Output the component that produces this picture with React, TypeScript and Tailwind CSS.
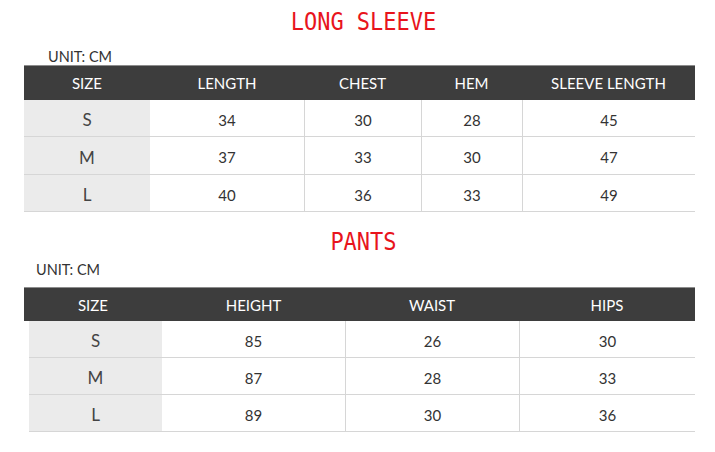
import React from 'react';

const font = { fontFamily: 'Lato, "Open Sans", sans-serif' };

const sleeveCols = ['SIZE', 'LENGTH', 'CHEST', 'HEM', 'SLEEVE LENGTH'];
const sleeveRows = [
  ['S', '34', '30', '28', '45'],
  ['M', '37', '33', '30', '47'],
  ['L', '40', '36', '33', '49'],
];

const pantsCols = ['SIZE', 'HEIGHT', 'WAIST', 'HIPS'];
const pantsRows = [
  ['S', '85', '26', '30'],
  ['M', '87', '28', '33'],
  ['L', '89', '30', '36'],
];

function Title({ text }: { text: string }) {
  return (
    <div className="h-[26px] pl-[12px] flex items-center justify-center">
      <span
        className="inline-block scale-y-[1.15] text-[22px] leading-[26px] text-[#e8141c]"
        style={{ fontFamily: '"DejaVu Sans Mono", "Liberation Mono", monospace' }}
      >
        {text}
      </span>
    </div>
  );
}

function cellClass(j: number) {
  if (j === 0) return 'flex items-center justify-center pt-[4px] bg-[#ebebeb] text-[17px] text-[#444]';
  if (j === 1) return 'flex items-center justify-center pt-[4px] text-[15px]';
  return 'flex items-center justify-center pt-[4px] text-[15px] border-l border-[#d6d6d6]';
}

export default function App() {
  return (
    <main className="w-[715px] h-[452px] bg-white text-[#333] overflow-hidden" style={font}>
      <div className="pt-[9px]">
        <Title text="LONG SLEEVE" />
      </div>

      <div className="mt-[11px] h-[19px] pl-[48px] pt-[1px] text-[14.5px] leading-[19px] text-[#333]">UNIT: CM</div>

      <div className="ml-[24px] w-[671px]">
        <div className="grid grid-cols-[126px_154px_117px_101px_173px] h-[35px] bg-[#3d3d3d] border-t border-[#8c8c8c] text-white text-[15px]">
          {sleeveCols.map((c) => (
            <div key={c} className="flex items-center justify-center pt-[1px]">{c}</div>
          ))}
        </div>
        {sleeveRows.map((r, i) => (
          <div
            key={r[0]}
            className={`grid grid-cols-[126px_154px_117px_101px_173px] border-b border-[#d6d6d6] ${i === 1 ? 'h-[38px]' : 'h-[37px]'}`}
          >
            {r.map((v, j) => (
              <div key={j} className={cellClass(j)}>
                {v}
              </div>
            ))}
          </div>
        ))}
      </div>

      <div className="mt-[17px]">
        <Title text="PANTS" />
      </div>

      <div className="mt-[4px] h-[19px] pl-[36px] pt-[1px] text-[14.5px] leading-[19px] text-[#333]">UNIT: CM</div>

      <div className="mt-[9px] ml-[24px] w-[671px]">
        <div className="grid grid-cols-[138px_183px_174px_176px] h-[34px] bg-[#3d3d3d] border-t border-[#8c8c8c] text-white text-[15px]">
          {pantsCols.map((c) => (
            <div key={c} className="flex items-center justify-center pt-[1px]">{c}</div>
          ))}
        </div>
        <div className="ml-[5px]">
          {pantsRows.map((r) => (
            <div key={r[0]} className="grid grid-cols-[133px_183px_174px_176px] h-[37px] border-b border-[#d6d6d6]">
              {r.map((v, j) => (
                <div key={j} className={cellClass(j)}>
                  {v}
                </div>
              ))}
            </div>
          ))}
        </div>
      </div>
    </main>
  );
}
